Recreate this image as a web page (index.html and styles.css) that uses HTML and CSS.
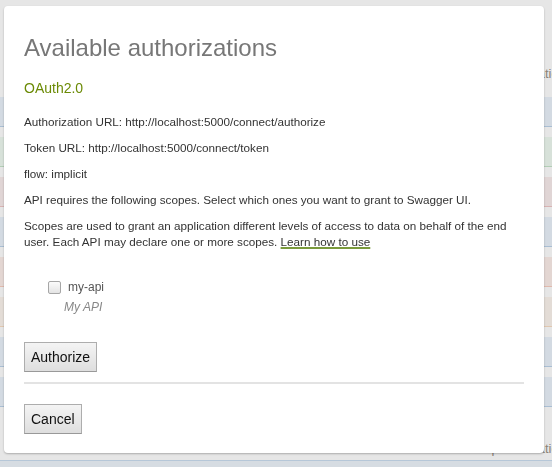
FILE: index.html
```html
<!DOCTYPE html>
<html>
<head>
<meta charset="utf-8">
<link rel="stylesheet" href="styles.css">
</head>
<body>
<div class="page">
  <div class="page-note"><span>Implementation</span></div>
  <div class="ops">
    <div class="op op-blue"></div>
    <div class="op op-green"></div>
    <div class="op op-red"></div>
    <div class="op op-blue"></div>
    <div class="op op-orange"></div>
    <div class="op op-beige"></div>
    <div class="op op-blue"></div>
    <div class="op op-blue"></div>
  </div>
  <div class="page-note page-note-low"><span>Implementation</span></div>
  <div class="footer-strip"></div>
</div>

<div class="dialog">
  <h3 class="dialog-title">Available authorizations</h3>
  <h4 class="scheme">OAuth2.0</h4>
  <p class="info">Authorization URL: http://localhost:5000/connect/authorize</p>
  <p class="info">Token URL: http://localhost:5000/connect/token</p>
  <p class="info">flow: implicit</p>
  <p class="info">API requires the following scopes. Select which ones you want to grant to Swagger UI.</p>
  <p class="info">Scopes are used to grant an application different levels of access to data on behalf of the end user. Each API may declare one or more scopes. <a class="learn" href="#">Learn how to use</a></p>
  <ul class="scopes">
    <li class="scope">
      <label class="scope-label"><span class="checkbox"></span><span class="scope-name">my-api</span></label>
      <span class="scope-desc">My API</span>
    </li>
  </ul>
  <div class="actions">
    <button class="btn">Authorize</button>
  </div>
  <hr class="divider">
  <div class="actions">
    <button class="btn">Cancel</button>
  </div>
</div>
</body>
</html>
```

FILE: styles.css
```css
html, body {
  margin: 0;
  padding: 0;
}
body {
  background: #e6e6e6;
  font-family: "Liberation Sans", Arial, sans-serif;
  width: 552px;
  height: 467px;
  overflow: hidden;
}
.page {
  display: flex;
  flex-direction: column;
  height: 467px;
}
.page-note {
  height: 27px;
  margin-top: 60px;
  padding-left: 545px;
  font-size: 13px;
  line-height: 27px;
  color: #8c8478;
  white-space: nowrap;
  overflow: hidden;
}
.page-note span {
  display: inline-block;
  margin-left: -68px;
}
.ops {
  display: flex;
  flex-direction: column;
  gap: 10px;
  margin-top: 12px;
}
.op {
  height: 29px;
  border-bottom: 1px solid #b9c6d3;
}
.op-blue { background: #d3dae2; border-color: #a9bed3; }
.op-green { background: #d7e1d9; border-color: #b2cdb6; }
.op-red { background: #e0d5d5; border-color: #d8b3b3; }
.op-orange { background: #e3d6d2; border-color: #e0b9ad; }
.op-beige { background: #e3dcd6; border-color: #e0c7b0; }
.page-note-low {
  margin-top: 28px;
}
.footer-strip {
  margin-top: auto;
  height: 7px;
  background: #d6dce2;
  border-top: 1px solid #b6c7d8;
}

.dialog {
  position: fixed;
  left: 4px;
  top: 6px;
  width: 540px;
  height: 447px;
  box-sizing: border-box;
  background: #fff;
  border-radius: 4px;
  box-shadow: 0 1px 2px rgba(0, 0, 0, 0.25);
  padding: 24px 20px 20px;
  color: #333;
}
.dialog-title {
  margin: 4px 0 0;
  font-size: 24px;
  font-weight: normal;
  line-height: 28px;
  color: #777;
}
.scheme {
  margin: 18px 0 18px;
  font-size: 14px;
  font-weight: normal;
  line-height: 16px;
  color: #6b8a05;
}
.info {
  margin: 0 0 10px;
  font-size: 11.7px;
  line-height: 16px;
  color: #333;
}
.learn {
  color: #333;
  text-decoration: underline;
  text-decoration-color: #7a9a3c;
  text-decoration-thickness: 2px;
}
.scopes {
  list-style: none;
  margin: 29px 0 0;
  padding: 0 0 0 24px;
}
.scope {
  display: flex;
  flex-direction: column;
  gap: 4px;
}
.scope-label {
  display: flex;
  align-items: center;
  gap: 7px;
  font-size: 12px;
  line-height: 16px;
  color: #555;
}
.checkbox {
  width: 11px;
  height: 11px;
  border: 1px solid #a6a6a6;
  border-radius: 2px;
  background: linear-gradient(#fbfbfb, #e4e4e4);
}
.scope-name {
  color: #555;
}
.scope-desc {
  padding-left: 16px;
  font-size: 12px;
  line-height: 16px;
  font-style: italic;
  color: #888;
}
.actions {
  display: flex;
}
.btn {
  margin-top: 27px;
  height: 30px;
  padding: 0 6px;
  font-family: "Liberation Sans", Arial, sans-serif;
  font-size: 14px;
  color: #111;
  background: linear-gradient(#f4f4f4, #dedede);
  border: 1px solid #adadad;
  border-bottom-color: #999;
  border-radius: 0;
}
.divider {
  margin: 10px 0 0;
  height: 2px;
  border: 0;
  background: #e3e3e3;
}
.divider + .actions .btn {
  margin-top: 20px;
}
```
